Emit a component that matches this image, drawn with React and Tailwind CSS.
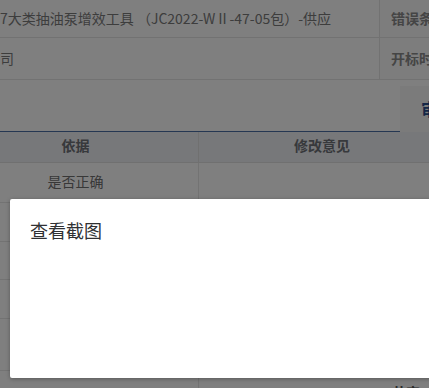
export default function App() {
  const font = { fontFamily: '"Noto Sans CJK SC", "Liberation Sans", sans-serif' };
  return (
    <div className="relative w-[429px] h-[388px] overflow-hidden bg-white text-[14px]" style={font}>
      {/* underlying page */}
      <div className="flex flex-col">
        <div className="flex h-[38px] border-b border-[#e4e4e4]">
          <div className="w-[379px] flex items-center text-[#7a7a7a] whitespace-nowrap overflow-hidden">
            7大类抽油泵增效工具 （JC2022-WⅡ-47-05包）-供应
          </div>
          <div className="flex-1 border-l border-[#e4e4e4] bg-[#fafafa] flex items-center pl-[11px] text-[#8a8a8a] font-bold whitespace-nowrap overflow-hidden">
            错误条
          </div>
        </div>
        <div className="flex h-[42px] border-b border-[#e4e4e4]">
          <div className="w-[379px] flex items-center text-[#7a7a7a]">司</div>
          <div className="flex-1 border-l border-[#e4e4e4] bg-[#fafafa] flex items-center pl-[11px] text-[#8a8a8a] font-bold whitespace-nowrap overflow-hidden">
            开标时
          </div>
        </div>
        <div className="flex h-[52px] items-end">
          <div className="flex-1 h-[31px] border-b border-[#4a6fa5]"></div>
          <div className="w-[29px] h-[46px] bg-[#f6f6f6] flex items-center pl-[21px] text-[#2a4c8c] font-bold text-[17px] whitespace-nowrap overflow-hidden">
            审核
          </div>
        </div>
        <div className="flex h-[31px] -ml-[47px] w-[492px] bg-[#eef0f4] border-b border-[#e0e0e0] font-bold text-[#6f7278]">
          <div className="w-[246px] border-r border-[#e0e0e0] flex items-center justify-center pb-[4px]">依据</div>
          <div className="w-[246px] flex items-center justify-center pb-[4px]">修改意见</div>
        </div>
        {[40, 39, 38, 39, 52, 40].map((h, i) => (
          <div key={i} className="flex -ml-[47px] w-[492px] border-b border-[#e6e6e6] text-[#707070]" style={{ height: h }}>
            <div className="w-[246px] border-r border-[#e6e6e6] flex items-center justify-center pb-[2px]">
              {i === 0 ? '是否正确' : ''}
            </div>
            <div className="w-[246px] flex items-start justify-end pr-[25px] pt-[11px] font-bold text-[#555] whitespace-nowrap">
              {i === 5 ? '共审' : ''}
            </div>
          </div>
        ))}
      </div>
      {/* overlay */}
      <div className="absolute inset-0 bg-black/50"></div>
      {/* dialog */}
      <div className="absolute left-[10px] top-[199px] w-[440px] h-[179px] bg-white rounded-[2px] shadow-[0_1px_4px_rgba(0,0,0,0.3)]">
        <div className="pl-[20px] pt-[19px] text-[18px] leading-[24px] text-[#303133]">查看截图</div>
      </div>
    </div>
  );
}
